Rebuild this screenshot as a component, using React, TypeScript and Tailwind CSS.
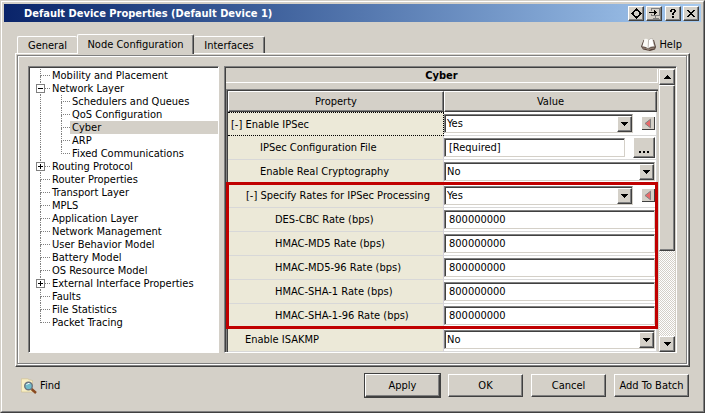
import React, { useState } from "react";

const raised =
  "border border-t-white border-l-white border-r-[#404040] border-b-[#404040] shadow-[inset_-1px_-1px_0_#808080] bg-[#d4d0c8]";
const sunken =
  "border border-t-[#808080] border-l-[#808080] border-r-white border-b-white shadow-[inset_1px_1px_0_#404040]";
const field =
  "border border-t-[#808080] border-l-[#808080] border-r-[#d4d0c8] border-b-[#d4d0c8] shadow-[inset_1px_1px_0_#404040] bg-white";

type Node = { label: string; level: 0 | 1; box?: "+" | "-"; last?: boolean };

const nodes: Node[] = [
  { label: "Mobility and Placement", level: 0 },
  { label: "Network Layer", level: 0, box: "-" },
  { label: "Schedulers and Queues", level: 1 },
  { label: "QoS Configuration", level: 1 },
  { label: "Cyber", level: 1 },
  { label: "ARP", level: 1 },
  { label: "Fixed Communications", level: 1, last: true },
  { label: "Routing Protocol", level: 0, box: "+" },
  { label: "Router Properties", level: 0 },
  { label: "Transport Layer", level: 0 },
  { label: "MPLS", level: 0 },
  { label: "Application Layer", level: 0 },
  { label: "Network Management", level: 0 },
  { label: "User Behavior Model", level: 0 },
  { label: "Battery Model", level: 0 },
  { label: "OS Resource Model", level: 0 },
  { label: "External Interface Properties", level: 0, box: "+" },
  { label: "Faults", level: 0 },
  { label: "File Statistics", level: 0 },
  { label: "Packet Tracing", level: 0, last: true },
];

function Branch({ width, last, box }: { width: string; last?: boolean; box?: "+" | "-" }) {
  return (
    <span className={`relative flex shrink-0 flex-col ${width}`}>
      <span className="h-[7px] border-b border-l border-dotted border-[#808080]" />
      {!last && <span className="h-[6px] border-l border-dotted border-[#808080]" />}
      {box && (
        <button
          aria-label={box === "+" ? "Expand" : "Collapse"}
          className="absolute top-[2px] -left-1 size-[9px] border border-[#808080] bg-white"
        >
          <svg viewBox="0 0 7 7" className="block size-[7px]" shapeRendering="crispEdges">
            <path d={box === "+" ? "M1 3h5v1H1zM3 1h1v5H3z" : "M1 3h5v1H1z"} />
          </svg>
        </button>
      )}
    </span>
  );
}

function Tree() {
  const [selected, setSelected] = useState("Cyber");
  return (
    <ul role="tree" aria-label="Node configuration" className={`w-[191px] shrink-0 bg-white pt-[2px] pl-px ${sunken}`}>
      {nodes.map((n) => (
        <li
          key={n.label}
          role="treeitem"
          aria-selected={n.label === selected}
          onClick={() => setSelected(n.label)}
          className="flex h-[13px] pl-[10px]"
        >
          {n.level === 1 && <span className="w-[21px] shrink-0 border-l border-dotted border-[#808080]" />}
          <Branch width={n.level === 1 ? "w-[9px]" : "w-[10px]"} last={n.last} box={n.box} />
          <span className={`flex-1 pl-[2px] whitespace-nowrap ${n.label === selected ? "bg-[#d4d0c8]" : ""}`}>
            {n.label}
          </span>
        </li>
      ))}
    </ul>
  );
}

function Triangle({ up }: { up?: boolean }) {
  return (
    <svg viewBox="0 0 7 4" className="h-1 w-[7px]" shapeRendering="crispEdges" aria-hidden="true">
      <path d={up ? "M3 0h1v1H3zM2 1h3v1H2zM1 2h5v1H1zM0 3h7v1H0z" : "M0 0h7v1H0zM1 1h5v1H1zM2 2h3v1H2zM3 3h1v1H3z"} />
    </svg>
  );
}

function Choice({ id, value }: { id: string; value: string }) {
  return (
    <div className={`relative flex h-[19px] flex-1 ${field}`}>
      <select id={id} defaultValue={value} className="w-full appearance-none bg-transparent pl-[2px] leading-[13px] outline-none">
        <option>Yes</option>
        <option>No</option>
      </select>
      <span className={`pointer-events-none absolute inset-y-0 right-0 top-px flex w-[15px] items-center justify-center ${raised}`}>
        <Triangle />
      </span>
    </div>
  );
}

function ResetButton() {
  return (
    <button aria-label="Reset to default" className="ml-[9px] flex h-[13px] w-[13px] shrink-0 items-center justify-center border-r border-b border-[#404040] bg-[#d4d0c8]">
      <svg viewBox="0 0 8 11" className="h-[11px] w-2" aria-hidden="true">
        <path d="M6.5 1.2 1 5.5l5.5 4.3z" fill="#e86a6a" stroke="#808080" />
      </svg>
    </button>
  );
}

type Row = { id: string; label: string; pad: string; kind: "select" | "reset" | "file" | "text"; value: string };

const rows: Row[] = [
  { id: "ipsec", label: "[-] Enable IPSec", pad: "pl-[3px]", kind: "reset", value: "Yes" },
  { id: "file", label: "IPSec Configuration File", pad: "pl-8", kind: "file", value: "[Required]" },
  { id: "crypto", label: "Enable Real Cryptography", pad: "pl-8", kind: "select", value: "No" },
  { id: "rates", label: "[-] Specify Rates for IPSec Processing", pad: "pl-[18px]", kind: "reset", value: "Yes" },
  { id: "des", label: "DES-CBC Rate (bps)", pad: "pl-[47px]", kind: "text", value: "800000000" },
  { id: "md5", label: "HMAC-MD5 Rate (bps)", pad: "pl-[47px]", kind: "text", value: "800000000" },
  { id: "md596", label: "HMAC-MD5-96 Rate (bps)", pad: "pl-[47px]", kind: "text", value: "800000000" },
  { id: "sha1", label: "HMAC-SHA-1 Rate (bps)", pad: "pl-[47px]", kind: "text", value: "800000000" },
  { id: "sha196", label: "HMAC-SHA-1-96 Rate (bps)", pad: "pl-[47px]", kind: "text", value: "800000000" },
  { id: "isakmp", label: "Enable ISAKMP", pad: "pl-[17px]", kind: "select", value: "No" },
];

function PropertyTable() {
  return (
    <div className="relative border-t border-l border-[#808080] pt-px pr-px pl-px shadow-[inset_1px_1px_0_#404040]">
      <table className="w-full table-fixed border-separate border-spacing-0">
        <thead>
          <tr className="h-[21px]">
            <th scope="col" className={`w-[216px] p-0 font-normal ${raised}`}>Property</th>
            <th scope="col" className={`p-0 font-normal ${raised}`}>Value</th>
          </tr>
        </thead>
        <tbody>
          {rows.map((r, i) => (
            <tr key={r.id} className="h-6">
              <th
                scope="row"
                className={`border-r border-b border-r-[#d4d0d8] bg-[#ece9d8] p-0 text-left font-normal whitespace-nowrap ${r.pad} ${
                  i === 0 ? "border-t border-dotted border-r-black border-t-black border-b-black" : "border-b-[#d8d8d8]"
                }`}
              >
                <label htmlFor={r.id}>{r.label}</label>
              </th>
              <td className="border-r border-b border-[#d8d8d8] bg-white p-0 pr-px">
                <div className="flex items-center">
                  {(r.kind === "select" || r.kind === "reset") && <Choice id={r.id} value={r.value} />}
                  {r.kind === "reset" && <ResetButton />}
                  {(r.kind === "text" || r.kind === "file") && (
                    <input id={r.id} defaultValue={r.value} className={`h-[19px] w-0 flex-1 px-1 outline-none ${field}`} />
                  )}
                  {r.kind === "file" && (
                    <button aria-label="Browse" className={`ml-2 flex h-[21px] w-[22px] shrink-0 items-center justify-center gap-[2px] pt-2 ${raised}`}>
                      <i className="size-[2px] bg-black" />
                      <i className="size-[2px] bg-black" />
                      <i className="size-[2px] bg-black" />
                    </button>
                  )}
                </div>
              </td>
            </tr>
          ))}
        </tbody>
      </table>
      <div className="pointer-events-none absolute top-[92px] right-0 -left-px h-[147px] border-3 border-[#c00000]" />
    </div>
  );
}

function ScrollBar() {
  return (
    <div className="ml-px flex w-4 shrink-0 flex-col bg-[repeating-conic-gradient(#ffffff_0_25%,#d4d0c8_0_50%)] bg-[length:2px_2px]">
      <button aria-label="Scroll up" className={`flex h-4 items-center justify-center ${raised}`}>
        <Triangle up />
      </button>
      <div className={`h-[166px] ${raised}`} />
      <div className="flex-1" />
      <button aria-label="Scroll down" className={`flex h-4 items-center justify-center ${raised}`}>
        <Triangle />
      </button>
    </div>
  );
}

const titleButton = `flex h-[15px] w-4 items-center justify-center ${raised}`;

function TitleBar() {
  return (
    <header className="flex h-[18px] items-center bg-linear-to-r from-[#0a246a] to-[#a6caf0] pr-[2px] pl-5">
      <h1 className="flex-1 font-bold whitespace-nowrap text-white">Default Device Properties (Default Device 1)</h1>
      <button aria-label="Center" className={titleButton}>
        <svg viewBox="0 0 11 11" className="size-[11px]" shapeRendering="crispEdges" aria-hidden="true">
          <path d="M5 0h1v1H5zM4 1h3v1H4zM3 2h5v1H3zM2 3h2v1H2zM7 3h2v1H7zM1 4h2v1H1zM8 4h2v1H8zM0 5h3v1H0zM8 5h3v1H8zM1 6h2v1H1zM8 6h2v1H8zM2 7h2v1H2zM7 7h2v1H7zM3 8h5v1H3zM4 9h3v1H4zM5 10h1v1H5z" />
        </svg>
      </button>
      <button aria-label="Send to" className={`ml-[2px] ${titleButton}`}>
        <svg viewBox="0 0 13 11" className="h-[11px] w-[13px]" shapeRendering="crispEdges" aria-hidden="true">
          <path d="M3 0h9v1H3zM11 1h1v7h-1zM3 7h8v1H3zM3 1h1v2H3zM3 6h1v1H3zM7 8h1v2H7zM5 10h6v1H5z" fill="#808080" />
          <path d="M1 4h5V2h1v1h1v1h1v1H8v1H7v1H6V5H1z" />
        </svg>
      </button>
      <button aria-label="What is this" className={`ml-[3px] ${titleButton}`}>
        <svg viewBox="0 0 6 9" className="h-[9px] w-1.5" shapeRendering="crispEdges" aria-hidden="true">
          <path d="M1 0h4v1H1zM0 1h2v2H0zM4 1h2v2H4zM3 3h2v1H3zM2 4h2v2H2zM2 7h2v2H2z" />
        </svg>
      </button>
      <button aria-label="Close" className={`ml-[2px] ${titleButton}`}>
        <svg viewBox="0 0 8 7" className="h-[7px] w-2" shapeRendering="crispEdges" aria-hidden="true">
          <path d="M0 0h2v1H0zM6 0h2v1H6zM1 1h2v1H1zM5 1h2v1H5zM2 2h4v1H2zM3 3h2v1H3zM2 4h4v1H2zM1 5h2v1H1zM5 5h2v1H5zM0 6h2v1H0zM6 6h2v1H6z" />
        </svg>
      </button>
    </header>
  );
}

const tab = "rounded-t-[2px] border-t border-l border-white text-center";

export default function App() {
  return (
    <div className="flex min-h-screen flex-col border border-t-[#d4d0c8] border-r-[#404040] border-b-[#404040] border-l-[#d4d0c8] bg-[#d4d0c8] font-['DejaVu_Sans_Condensed','DejaVu_Sans',sans-serif] text-[11px] leading-[13px] text-black">
      <div className="flex flex-1 flex-col border border-t-white border-r-[#808080] border-b-[#808080] border-l-white p-[2px]">
        <TitleBar />
        <div className="flex flex-1 flex-col px-[11px] pt-3">
          <div className="flex items-end">
            <div role="tablist" className="flex items-end pl-[2px]">
              <button role="tab" aria-selected="false" className={`h-[17px] w-[60px] pt-px ${tab}`}>General</button>
              <button role="tab" aria-selected="true" className={`z-10 -mb-px h-5 w-[117px] border-r border-r-[#404040] bg-[#d4d0c8] shadow-[inset_-1px_0_0_#808080] ${tab}`}>
                Node Configuration
              </button>
              <button role="tab" aria-selected="false" className="h-[17px] w-[71px] rounded-t-[2px] border-t border-r border-t-white border-r-[#404040] pt-px text-center shadow-[inset_-1px_0_0_#808080]">
                Interfaces
              </button>
            </div>
            <button className="mr-2 mb-[2px] ml-auto flex items-center gap-[3px]">
              <svg viewBox="0 0 15 13" className="h-[13px] w-[15px]" aria-hidden="true">
                <path d="M0 8.500 2.500 2l2 .5L13 2l2 7-1 2.500-5 1.500-7-1.500z" fill="#54423a" />
                <path d="M1.200 8.500 3.500 1Q6 .3 7.500 2.200L7 10.500Q4.500 8 1.200 8.500z" fill="#fbfaf6" />
                <path d="M7.500 2.200Q9 .3 11.500.5l2 8Q9.500 8.300 7 10.500z" fill="#fff" stroke="#a39a90" strokeWidth=".5" />
                <path d="M1.500 10q3.500-.3 6 1.700Q10 10 13.500 10" stroke="#c4b3a2" strokeWidth=".7" fill="none" />
              </svg>
              Help
            </button>
          </div>

          <main className="border border-t-white border-r-[#404040] border-b-[#404040] border-l-white pt-px pr-[2px] pb-[2px] pl-px shadow-[inset_-1px_-1px_0_#808080]">
            <div className="flex gap-[5px] border border-[#808080] pt-[10px] pr-[9px] pb-[10px] pl-[10px] shadow-[inset_1px_1px_0_#ffffff,1px_1px_0_#ffffff]">
              <Tree />
              <section className={`flex min-w-0 flex-1 pt-[2px] pr-px pl-px ${sunken}`}>
                <div className="flex min-w-0 flex-1 flex-col">
                  <h2 className="h-[14px] border-r border-b border-white text-center font-bold">Cyber</h2>
                  <div className="mt-[6px]">
                    <PropertyTable />
                  </div>
                </div>
                <ScrollBar />
              </section>
            </div>
          </main>

          <footer className="flex items-center gap-[7px] pt-[6px] pr-px pb-2">
            <button className="mr-auto ml-[6px] flex items-center gap-[3px]">
              <svg viewBox="0 0 16 16" className="size-4" aria-hidden="true">
                <path d="M.3.8h6.500l1.500 1 3.200.7V14H.3z" fill="#f8efc4" stroke="#cbb98a" strokeWidth=".6" />
                <path d="m10.500 11 4.500 4" stroke="#8a4a20" strokeWidth="2.400" />
                <circle cx="7.500" cy="8" r="3.800" fill="#6fbccb" stroke="#6b7480" strokeWidth="1.400" />
                <path d="M5.500 7q1-2 3-1.500" stroke="#fff" fill="none" />
              </svg>
              Find
            </button>
            <button className="border border-[#404040]">
              <span className={`flex h-[23px] w-[75px] items-center justify-center ${raised}`}>Apply</span>
            </button>
            <button className={`h-[23px] w-[75px] ${raised}`}>OK</button>
            <button className={`ml-px h-[23px] w-[75px] ${raised}`}>Cancel</button>
            <button className={`ml-px h-[23px] w-[75px] whitespace-nowrap ${raised}`}>Add To Batch</button>
          </footer>
        </div>
      </div>
    </div>
  );
}
